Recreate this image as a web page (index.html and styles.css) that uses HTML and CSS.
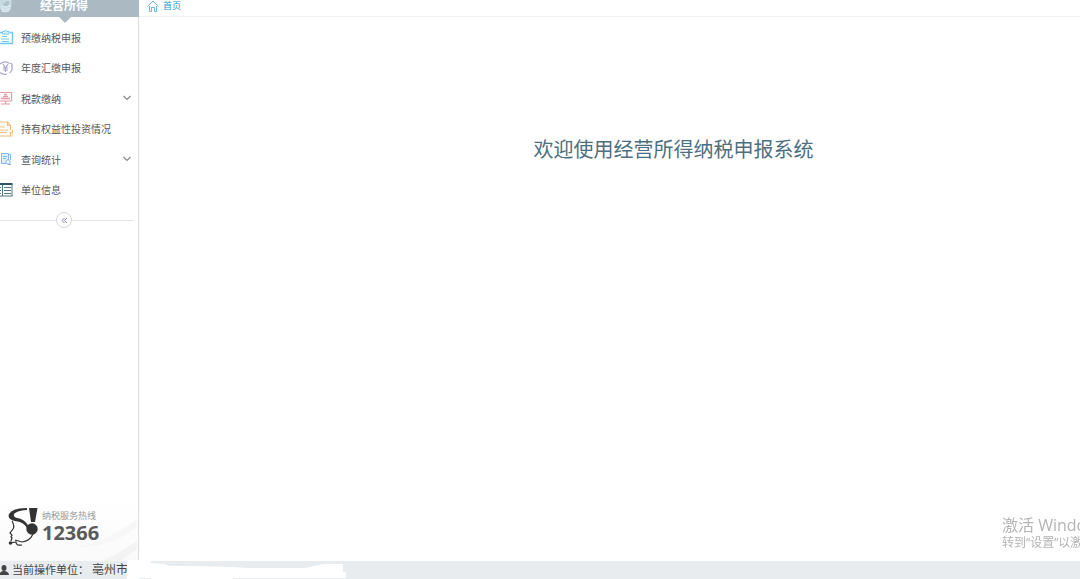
FILE: index.html
```html
<!DOCTYPE html>
<html lang="zh-CN">
<head>
    <meta charset="UTF-8">
    <meta name="viewport" content="width=device-width, initial-scale=1.0">
    <title>经营所得纳税申报系统</title>
    <link rel="stylesheet" href="styles.css">
</head>
<body>
    <div class="layout">
        <aside class="sidebar">
            <div class="sidebar-header">
                <svg class="icon" width="14" height="14" viewBox="0 0 14 14" fill="none">
                    <path d="M0 0h11.500v4l-1 6-2 2H2L0 8z" fill="#c9dbe2"/>
                    <path d="M1 6.500q5 2 10-1M1 9q5 2 9-1M2 11.500q4 1 7-1" stroke="#e2eff4"/>
                    <path d="M3 4h3V2h3M4 5h4V2" stroke="#9fb3bd"/>
                </svg>
                <h2>经营所得</h2>
            </div>

            <nav class="menu">
                <a href="#">
                    <svg class="icon" width="14" height="16" viewBox="0 0 14 16" fill="none" stroke="#6ec8f2">
                        <path d="M2 3.500H0M10 3.500h2.500v11H0" stroke-width="1.400"/>
                        <path d="M2.500 5V2.500H4q1.500-2.500 3 0h2V5z" fill="#d9f1fc"/>
                        <path d="M2 7.500h5M1 10h8M2 12.500h7"/>
                    </svg>
                    <span>预缴纳税申报</span>
                </a>
                <a href="#">
                    <svg class="icon" width="14" height="16" viewBox="0 0 14 16" fill="none" stroke="#aaa2d4">
                        <path d="M0 4Q5 0 9.500 3.500M11.500 5.500q2 5-2 7.500M0 12.500q3 2.500 7 1.500M10 3l2 1v3" stroke-width="1.200"/>
                        <path d="M3 4l2.500 4L8 4M5.500 8v4M3 8h5M3 10h5" stroke-width="1.200"/>
                    </svg>
                    <span>年度汇缴申报</span>
                </a>
                <a href="#">
                    <svg class="icon" width="14" height="16" viewBox="0 0 14 16" fill="none" stroke="#e99aa2">
                        <path d="M0 2.500h11.500v8.500H0M5.500 11v3M1 14h9" stroke-width="1.200"/>
                        <path d="M4 4.500h3M3 6.500h5M1 8.500h9" stroke-width="1.500"/>
                    </svg>
                    <span>税款缴纳</span>
                    <svg class="arrow" width="8" height="6" viewBox="0 0 8 6" fill="none" stroke="#888"><path d="M.5 1L4 4.500 7.500 1" stroke-width="1.200"/></svg>
                </a>
                <a href="#">
                    <svg class="icon" width="14" height="16" viewBox="0 0 14 16" fill="none" stroke="#f6bd78">
                        <path d="M0 1h7.500l3 3.500V9M7.500 1v3.500h3M0 15h8.500M12.500 9v3h-2M10.500 11v4M8.500 15h4" stroke-width="1.200"/>
                        <path d="M0 6h5M0 9h8M0 11.500h7" stroke-width="1.200"/>
                    </svg>
                    <span>持有权益性投资情况</span>
                </a>
                <a href="#">
                    <svg class="icon" width="14" height="16" viewBox="0 0 14 16" fill="none" stroke="#82b4f2">
                        <path d="M1.500 2.500h7v10h-7z" fill="#e3effd"/>
                        <path d="M8.500 3.500h2V9M3 5.500h4M3 7.500h3"/>
                        <circle cx="8" cy="11" r="2.200" fill="#fff"/>
                        <path d="M8 13.500h3"/>
                    </svg>
                    <span>查询统计</span>
                    <svg class="arrow" width="8" height="6" viewBox="0 0 8 6" fill="none" stroke="#888"><path d="M.5 1L4 4.500 7.500 1" stroke-width="1.200"/></svg>
                </a>
                <a href="#">
                    <svg class="icon" width="14" height="16" viewBox="0 0 14 16" fill="none" stroke="#537585">
                        <path d="M0 2h12.500" stroke="#315465" stroke-width="2"/>
                        <path d="M12 2v12M0 14h12.500M4 5.500h7M4 8.500h7M4 11.500h7M2.500 3v11M0 5.500h1M0 8.500h1M0 11.500h1"/>
                    </svg>
                    <span>单位信息</span>
                </a>
            </nav>

            <div class="collapse">
                <button type="button" aria-label="收起菜单">
                    <svg width="7" height="7" viewBox="0 0 7 7" fill="none" stroke="#8585a5"><path d="M3.500 1L1 3.500 3.500 6M6 1L3.500 3.500 6 6"/></svg>
                </button>
            </div>

            <div class="hotline">
                <svg class="waves" width="80" height="60" viewBox="0 0 80 60">
                    <path d="M20 46Q54 38 79 18v8Q54 46 20 46z" fill="#f7f7f7"/>
                    <path d="M44 60Q62 52 79 40v8L62 60z" fill="#f3f3f3"/>
                </svg>
                <svg class="hotline-logo" width="30" height="40" viewBox="0 0 30 40">
                    <path d="M21 1h8.500l-2.500 14h-4z" fill="#333"/>
                    <circle cx="24" cy="22" r="5.700" fill="#333"/>
                    <path d="M19 1Q4 1 1 7q-2 5 6 7 9 1 12 7l1-3Q16 12 9 11C3 9 5 4 19 3z" fill="#333"/>
                    <path d="M4 14q3 5 1 8l-3 4 2 2-1 2 1 1-1 3M25 27q-3 7-11 8L7 33" fill="none" stroke="#333" stroke-width="1.200"/>
                    <path d="M2 36l6-1q0 4 6 3" fill="none" stroke="#333" stroke-width="1.200"/>
                    <circle cx="2.500" cy="36" r="1.800" fill="#333"/>
                </svg>
                <div class="hotline-text">
                    <span>纳税服务热线</span>
                    <strong>12366</strong>
                </div>
            </div>
        </aside>

        <main class="content">
            <div class="breadcrumb">
                <a href="#">
                    <svg width="12" height="12" viewBox="0 0 12 12" fill="none" stroke="#76b5d2">
                        <path d="M.5 6.500L6 1l5.500 5.500M2.500 6v5.500h2v-4h3v4h2V6"/>
                    </svg>
                    <span>首页</span>
                </a>
            </div>
            <h1>欢迎使用经营所得纳税申报系统</h1>
        </main>
    </div>

    <footer class="status">
        <svg width="9" height="11" viewBox="0 0 9 11" fill="#444">
            <ellipse cx="4" cy="3" rx="2.500" ry="3"/>
            <path d="M0 10q-1-3 3-4h2q4 1 4 4z"/>
        </svg>
        <span class="status-label">当前操作单位：</span>
        <span class="status-value">亳州市</span>
        <svg class="eraser" width="220" height="19" viewBox="0 0 220 19">
            <path d="M0 0h24v3l14 1 4 2h15l50 1 12 1h60l8-2 10-2h19v8h3v6H106v1H24v-1H12v1H0z" fill="#fff"/>
        </svg>
    </footer>

    <div class="watermark">
        <p class="watermark-title">激活 Windows</p>
        <p>转到“设置”以激活 Windows。</p>
    </div>
</body>
</html>
```

FILE: styles.css
```css
* {
    box-sizing: border-box;
}

body {
    font-family: "Open Sans", "Noto Sans CJK SC", sans-serif;
    background: #fff;
    color: #555;
    margin: 0;
    min-height: 100vh;
    display: flex;
    flex-direction: column;
    overflow: hidden;
}

h1, h2, p {
    margin: 0;
    font-weight: normal;
}

a {
    color: inherit;
    text-decoration: none;
}

svg {
    flex: none;
}

.layout {
    flex: 1;
    display: flex;
}

/* sidebar */
.sidebar {
    width: 139px;
    display: flex;
    flex-direction: column;
    border-right: 1px solid #dcdcdc;
}

.sidebar-header {
    position: relative;
    display: flex;
    height: 17px;
    margin-right: -1px;
    background: #abb9c2;
    color: #fff;
}

.sidebar-header h2 {
    margin-left: 26px;
    font-size: 12px;
    font-weight: bold;
    line-height: 12px;
}

.sidebar-header::after {
    content: "";
    position: absolute;
    top: 100%;
    left: 59px;
    border: 6px solid transparent;
    border-top-color: #abb9c2;
    border-bottom: 0;
}

.menu {
    display: grid;
    grid-auto-rows: 1fr;
    height: 183px;
    margin-top: 5px;
}

.menu a {
    display: flex;
    align-items: center;
    gap: 7px;
    padding-right: 7px;
    font-size: 10px;
    white-space: nowrap;
}

.menu .arrow {
    margin-left: auto;
}

.collapse {
    display: flex;
    align-items: center;
    margin: 7px 4px 0 0;
}

.collapse::before,
.collapse::after {
    content: "";
    height: 1px;
    background: #e4e4e4;
    flex: 1;
}

.collapse::before {
    flex: none;
    width: 56px;
}

.collapse button {
    display: flex;
    align-items: center;
    justify-content: center;
    width: 16px;
    height: 16px;
    padding: 0;
    border: 1px solid #d5d5d5;
    border-radius: 50%;
    background: #fff;
    cursor: pointer;
}

.hotline {
    position: relative;
    display: flex;
    align-items: center;
    gap: 4px;
    height: 60px;
    margin-top: auto;
    padding: 0 0 8px 8px;
    background: linear-gradient(#fff, #fafafa);
}

.waves {
    position: absolute;
    right: 0;
    bottom: 0;
}

.hotline-logo,
.hotline-text {
    position: relative;
}

.hotline-text {
    display: flex;
    flex-direction: column;
}

.hotline-text span {
    font-size: 9px;
    line-height: 12px;
    color: #999;
}

.hotline-text strong {
    font-size: 20px;
    line-height: 22px;
    color: #5a5a5a;
}

/* content */
.content {
    flex: 1;
    min-width: 0;
}

.breadcrumb {
    height: 17px;
    padding-left: 8px;
    border-bottom: 1px solid #f0f2f3;
}

.breadcrumb a {
    display: inline-flex;
    align-items: center;
    gap: 4px;
    height: 12px;
    font-size: 9px;
    line-height: 12px;
    color: #1b96cf;
    vertical-align: top;
}

.content h1 {
    margin-top: 118px;
    padding-left: 128px;
    font-size: 20px;
    line-height: 30px;
    text-align: center;
    color: #4c6f81;
}

/* status bar */
.status {
    position: relative;
    display: flex;
    align-items: center;
    height: 18px;
    gap: 3px;
    background: #e8ecef;
    color: #444;
    white-space: nowrap;
}

.status-label {
    font-size: 11px;
    line-height: 18px;
}

.status-value {
    font-size: 12px;
    line-height: 18px;
}

.eraser {
    position: absolute;
    left: 127px;
    bottom: 0;
}

.watermark {
    position: fixed;
    right: 0;
    bottom: 27px;
    width: 78px;
    overflow: hidden;
    white-space: nowrap;
    color: #b4b4b4;
    font-size: 12px;
    line-height: 18px;
}

.watermark-title {
    font-size: 16px;
}
```
